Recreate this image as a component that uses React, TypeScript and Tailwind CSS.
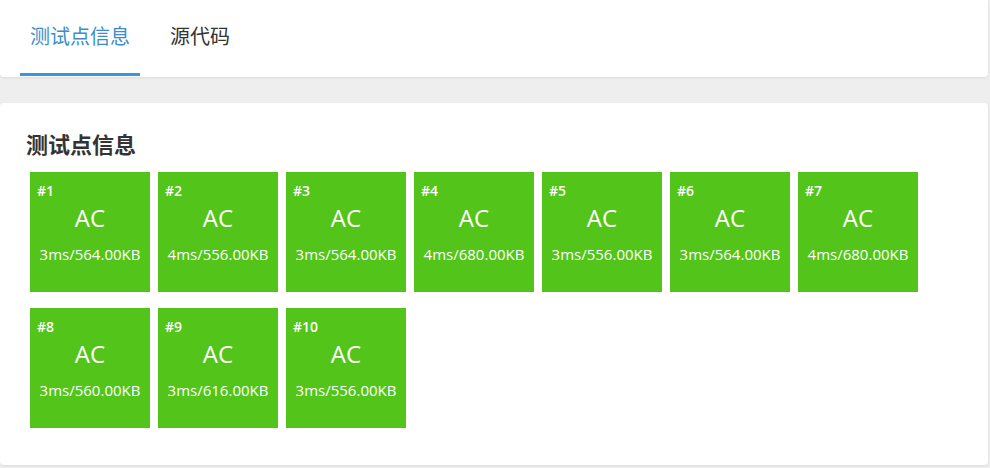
import React from "react";

const cases = [
  ["#1", "3ms/564.00KB"],
  ["#2", "4ms/556.00KB"],
  ["#3", "3ms/564.00KB"],
  ["#4", "4ms/680.00KB"],
  ["#5", "3ms/556.00KB"],
  ["#6", "3ms/564.00KB"],
  ["#7", "4ms/680.00KB"],
  ["#8", "3ms/560.00KB"],
  ["#9", "3ms/616.00KB"],
  ["#10", "3ms/556.00KB"],
];

const font = { fontFamily: '"Open Sans", "Noto Sans CJK SC", sans-serif' };

export default function App() {
  return (
    <div className="w-[990px] h-[468px] bg-[#eeeeee] overflow-hidden" style={font}>
      <div className="h-[77px] mr-[2px] bg-white rounded-b-[4px] shadow-[0_1px_3px_rgba(0,0,0,0.08)] flex items-start gap-[20px] pl-[20px]">
        <div className="h-[76px] px-[10px] flex items-center text-[20px] text-[#3c8dcc] border-b-[3px] border-[#3498db]">测试点信息</div>
        <div className="h-[76px] px-[10px] flex items-center text-[20px] text-[#333] border-b-[3px] border-transparent">源代码</div>
      </div>
      <div className="mt-[26px] mr-[2px] h-[362px] bg-white rounded-[4px] shadow-[0_1px_3px_rgba(0,0,0,0.08)] pl-[26px] pt-[26px]">
        <div className="text-[22px] font-bold text-[#333] leading-[30px]">测试点信息</div>
        <div className="mt-[13px] ml-[4px] w-[900px] flex flex-wrap gap-x-[8px] gap-y-[16px]">
          {cases.map(([id, info]) => (
            <div key={id} className="w-[120px] h-[120px] bg-[#52c41a] text-white flex flex-col px-[7px] pt-[10px]">
              <div className="text-[14px] font-semibold leading-[18px]">{id}</div>
              <div className="text-[24px] leading-[30px] text-center mt-[3px]">AC</div>
              <div className="text-[15px] leading-[20px] text-center mt-[11px] -mx-[7px]">{info}</div>
            </div>
          ))}
        </div>
      </div>
    </div>
  );
}
